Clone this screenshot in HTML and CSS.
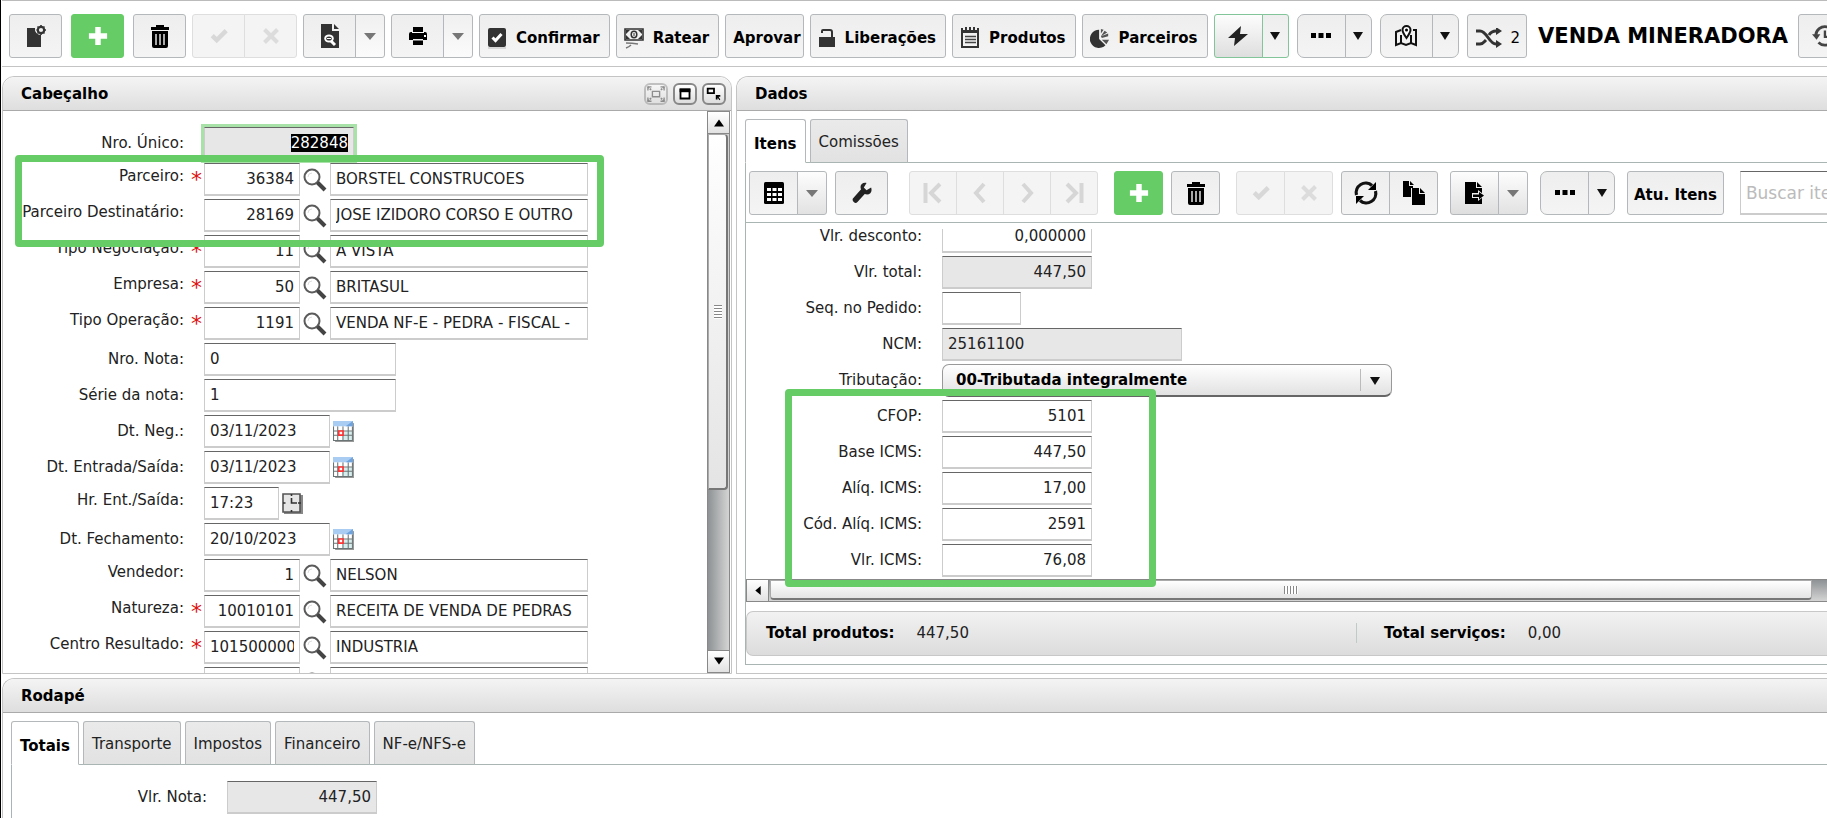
FILE: index.html
```html
<!DOCTYPE html>
<html lang="pt-BR">
<head>
<meta charset="utf-8">
<title>Venda Mineradora</title>
<link rel="stylesheet" href="styles.css">
</head>
<body>
<svg class="sprite" aria-hidden="true">
  <symbol id="i-new" viewBox="0 0 20 22"><path fill="#333" d="M1 3h8a6 6 0 0 0 6 7v12H1z"/><circle cx="15" cy="5" r="3.2" fill="none" stroke="#333" stroke-width="2.2"/><path stroke="#333" stroke-width="1.6" d="M15 0v1.5M15 8.500V10M10.500 5H12M18 5h2M11.500 1.500l1 1M18.500 8.500l-1-1M18.500 1.500l-1 1M11.500 8.500l1-1"/></symbol>
  <symbol id="i-plus" viewBox="0 0 22 22"><path fill="#fff" d="M8 1h6v7h7v6h-7v7H8v-7H1V8h7z"/></symbol>
  <symbol id="i-trash" viewBox="0 0 20 24"><path d="M6 1h8v2h5v3H1V3h5zM2 7h16v15a2 2 0 0 1-2 2H4a2 2 0 0 1-2-2z"/><path fill="#aaa" d="M5 10h2v11H5zM9 10h2v11H9zM13 10h2v11h-2z"/></symbol>
  <symbol id="i-check" viewBox="0 0 20 18"><path fill="none" stroke="#d8d8d8" stroke-width="5" d="M2.500 8.500l5 5L18 3"/></symbol>
  <symbol id="i-x" viewBox="0 0 18 18"><path fill="none" stroke="#dcdcdc" stroke-width="4" d="M2.500 2.500l13 13M15.500 2.500l-13 13"/></symbol>
  <symbol id="i-docsearch" viewBox="0 0 20 24"><path fill="#333" d="M1 0h11v7h7v17H1zM14 0l5 5h-5z"/><ellipse cx="9" cy="14.500" rx="3.800" ry="3" fill="#333" stroke="#fff" stroke-width="2"/><path stroke="#fff" stroke-width="3" d="M11 17l4 4"/><path stroke="#fff" d="M7 14.500h4"/></symbol>
  <symbol id="i-print" viewBox="0 0 20 20"><path d="M5 1h10v5H5zM3 6h14a2 2 0 0 1 2 2v6h-4v-1H5v1H1V8a2 2 0 0 1 2-2zM5 14.500h10V19H5z"/><path fill="#fff" d="M4 6h12v1H4zM16 9h2v2h-2z"/></symbol>
  <symbol id="i-down" viewBox="0 0 12 8"><path d="M0 1h12L6 8z"/></symbol>
  <symbol id="i-tri" viewBox="0 0 10 8"><path d="M0 0h10L5 8z"/></symbol>
  <symbol id="i-confirm" viewBox="0 0 20 22"><rect x="1" y="1" width="18" height="19" rx="2" fill="#333"/><path d="M1 21h18" stroke="#bbb"/><path fill="none" stroke="#fff" stroke-width="3" d="M5.500 10.500l3 3 6-6.500"/></symbol>
  <symbol id="i-money" viewBox="0 0 20 22"><path fill="none" stroke="#333" stroke-width="1.600" d="M1 2h18v11H1z"/><ellipse cx="10" cy="7.500" rx="2.800" ry="3.200" fill="none" stroke="#333" stroke-width="1.500"/><path fill="#333" d="M2 3h4L2 7zM18 3h-4l4 4zM2 12h4L2 8zM18 12h-4l4-4z"/><path stroke="#333" d="M10 6v3"/><path fill="none" stroke="#777" stroke-width="1.500" d="M2 16c3 0 6 0 12 1M2 21c3-1 4-2 5-3"/></symbol>
  <symbol id="i-lock" viewBox="0 0 18 20"><path fill="#333" d="M1 9h16v10H1z"/><path fill="none" stroke="#333" stroke-width="2" d="M4 5V3q0-1 1-1h7q2 0 2 2v6"/></symbol>
  <symbol id="i-note" viewBox="0 0 20 22"><path fill="none" stroke="#333" stroke-width="2" d="M2 4h16v16H2z"/><path fill="#333" d="M1 1h2v5H1zM5 0h2v5H5zM9 0h2v5H9zM13 0h2v5h-2zM17 1h2v5h-2zM1 3h18v3H1z"/><path stroke="#444" stroke-width="1.500" d="M5 9.500h11M5 12.500h11M5 15.500h11"/></symbol>
  <symbol id="i-pie" viewBox="0 0 22 22"><path fill="#333" d="M10 2v10l7 7A10 10 0 1 1 10 2z"/><path fill="#555" d="M12 1l3 1-3 4zM16 3l3 2-7 4zM12 9l8-3v3l-7 2zM13 13h8l-3 5z"/></symbol>
  <symbol id="i-bolt" viewBox="0 0 20 22"><path fill="#222" d="M13 1L0 13h7L6 21 20 9h-8z"/></symbol>
  <symbol id="i-dots" viewBox="0 0 20 6"><path d="M0 0h5v5H0zM7.500 0h5v5h-5zM15 0h5v5h-5z"/></symbol>
  <symbol id="i-map" viewBox="0 0 24 22"><path fill="none" stroke="#111" stroke-width="2" d="M7 5L2 7v13l5-2 5 2 5-2 5 2V5h-3M7 10v8M17 10v8"/><path fill="#fff" stroke="#111" stroke-width="2" d="M12.500 13C9 8 8.500 7 8.500 5a4 4 0 0 1 8 0c0 2-.500 3-4 8z"/><circle cx="12.500" cy="5" r="1.500"/></symbol>
  <symbol id="i-shuffle" viewBox="0 0 28 20"><path fill="none" stroke="#333" stroke-width="3" d="M1 3h4c7 0 9 13 16 13h2M1 16h4c3 0 4-2 6-4M14 7c2-3 4-4 7-4h2"/><path fill="#333" d="M21-1l6 4-6 4zM21 12l6 4-6 4z"/></symbol>
  <symbol id="i-history" viewBox="0 0 26 24"><path fill="none" stroke="#444" stroke-width="3" d="M4 12A10 10 0 1 1 7 19"/><path fill="#444" d="M0 10h9l-4 6z"/><path fill="none" stroke="#444" stroke-width="2.500" d="M14 6v7h5"/></symbol>
  <symbol id="i-search" viewBox="0 0 24 24"><circle cx="9" cy="9" r="7.500" fill="none" stroke="#5b5b5b" stroke-width="2"/><path stroke="#444" stroke-width="4" d="M14.500 14.500L22 22"/><path fill="none" stroke="#ddd" d="M5 9a4 4 0 0 1 4-4"/></symbol>
  <symbol id="i-cal" viewBox="0 0 20 20"><path fill="#999" d="M2 2h18v18H2z"/><path fill="#fff" d="M0 0h19v19H0z"/><path fill="#d5eded" d="M9 10h9v8H9z"/><path fill="none" stroke="#6b7475" d="M.500 5v13.500h18V5M0 9.500h18M0 13.500h18M4.500 5v13M9.500 5v13M14.500 5v13"/><path fill="#a9cdf2" d="M0 0h19v5H0z"/><path fill="#6fa3dd" d="M12 5l7-5v5z"/><path fill="#fff" stroke="#f33" stroke-width="1.600" d="M5.500 9.500h4v4h-4z"/></symbol>
  <symbol id="i-clock" viewBox="0 0 21 21"><path fill="#888" d="M2 2h19v19H2z"/><path fill="#e6e6e6" stroke="#555" stroke-width="1.600" d="M1 1h17v18H1z"/><path fill="none" stroke="#333" stroke-width="1.600" d="M9.500 5v5H15M9.500 1v2M9.500 17v2M1 10h2.500M16 10h3"/></symbol>
  <symbol id="i-table" viewBox="0 0 20 22"><rect width="20" height="22" rx="1.500"/><path fill="#fff" d="M3 6h4v3H3zM8.500 6h4v3h-4zM14 6h4v3h-4zM3 11h4v3H3zM8.500 11h4v3h-4zM14 11h4v3h-4zM3 16h4v3H3zM8.500 16h4v3h-4zM14 16h4v3h-4z"/></symbol>
  <symbol id="i-wrench" viewBox="0 0 22 22"><path fill="#222" d="M21 5l-5 3-3-3 3-5c-5-1-8 3-6 7L1 17q-1 2 1 4t4 0l8-9c5 2 9-2 7-7z"/></symbol>
  <symbol id="i-first" viewBox="0 0 20 22"><path fill="none" stroke="#d6d6d6" stroke-width="4" d="M2.500 1v20M17 2l-9 9 9 9"/></symbol>
  <symbol id="i-prev" viewBox="0 0 20 22"><path fill="none" stroke="#d6d6d6" stroke-width="4" d="M14 2l-8 9 8 9"/></symbol>
  <symbol id="i-next" viewBox="0 0 20 22"><path fill="none" stroke="#d6d6d6" stroke-width="4" d="M6 2l8 9-8 9"/></symbol>
  <symbol id="i-last" viewBox="0 0 20 22"><path fill="none" stroke="#d6d6d6" stroke-width="4" d="M17.500 1v20M3 2l9 9-9 9"/></symbol>
  <symbol id="i-refresh" viewBox="0 0 24 24"><path fill="none" stroke="#111" stroke-width="3.200" d="M2.500 14A9.500 9.500 0 0 1 18 4.500M21.500 10A9.500 9.500 0 0 1 6 19.500"/><path d="M22 1v8h-8zM2 23v-8h8z"/></symbol>
  <symbol id="i-copy" viewBox="0 0 22 24"><path d="M0 0h6v5h4v2H8v9H0zM7 0l4 4H7zM9 7h7v6h6v11H9zM17 7l5 5h-5z"/></symbol>
  <symbol id="i-export" viewBox="0 0 20 22"><path d="M0 0h11v6h6v16H0zM12 0l5 5h-5z"/><path fill="#eee" d="M7 11h6V8l7 5.500-7 5.500v-3H7z"/><path d="M8 12.500h6V10l5 3.500-5 4v-2.500H8z"/></symbol>
</svg>

<header class="toolbar">
  <div class="cluster cluster-wide">
    <button class="btn btn-icon" aria-label="Novo"><svg class="ico"><use href="#i-new"/></svg></button>
    <button class="btn btn-icon btn-add" aria-label="Adicionar"><svg class="ico"><use href="#i-plus"/></svg></button>
    <button class="btn btn-icon" aria-label="Excluir"><svg class="ico ico-tall"><use href="#i-trash"/></svg></button>
  </div>
  <div class="cluster">
    <div class="group">
      <button class="btn btn-icon" disabled aria-label="Salvar"><svg class="ico-sm"><use href="#i-check"/></svg></button>
      <button class="btn btn-icon" disabled aria-label="Cancelar"><svg class="ico-sm"><use href="#i-x"/></svg></button>
    </div>
    <div class="group">
      <button class="btn btn-icon" aria-label="Visualizar"><svg class="ico ico-tall"><use href="#i-docsearch"/></svg></button>
      <button class="btn btn-drop soft" aria-label="Opções de visualização"><svg class="caret"><use href="#i-down"/></svg></button>
    </div>
    <div class="group">
      <button class="btn btn-icon" aria-label="Imprimir"><svg class="ico"><use href="#i-print"/></svg></button>
      <button class="btn btn-drop soft" aria-label="Opções de impressão"><svg class="caret"><use href="#i-down"/></svg></button>
    </div>
    <button class="btn btn-text"><svg class="ico"><use href="#i-confirm"/></svg>Confirmar</button>
    <button class="btn btn-text"><svg class="ico"><use href="#i-money"/></svg>Ratear</button>
    <button class="btn btn-text btn-tight">Aprovar</button>
    <button class="btn btn-text"><svg class="ico-sm"><use href="#i-lock"/></svg>Liberações</button>
    <button class="btn btn-text"><svg class="ico"><use href="#i-note"/></svg>Produtos</button>
    <button class="btn btn-text"><svg class="ico"><use href="#i-pie"/></svg>Parceiros</button>
  </div>
  <div class="cluster cluster-mid">
    <div class="group group-green">
      <button class="btn btn-mid raised" aria-label="Ações rápidas"><svg class="ico"><use href="#i-bolt"/></svg></button>
      <button class="btn btn-arrow" aria-label="Mais ações rápidas"><svg class="caret-sm"><use href="#i-tri"/></svg></button>
    </div>
    <div class="group group-round">
      <button class="btn btn-mid" aria-label="Mais"><svg class="dots"><use href="#i-dots"/></svg></button>
      <button class="btn btn-arrow" aria-label="Mais opções"><svg class="caret-sm"><use href="#i-tri"/></svg></button>
    </div>
    <div class="group group-round">
      <button class="btn btn-icon" aria-label="Mapa"><svg class="ico-lg"><use href="#i-map"/></svg></button>
      <button class="btn btn-arrow" aria-label="Opções do mapa"><svg class="caret-sm"><use href="#i-tri"/></svg></button>
    </div>
    <button class="btn btn-text btn-shuffle"><svg class="ico-wide"><use href="#i-shuffle"/></svg><span>2</span></button>
    <h1 class="title">VENDA MINERADORA</h1>
    <button class="btn btn-icon" aria-label="Histórico"><svg class="ico-lg"><use href="#i-history"/></svg></button>
  </div>
</header>

<main class="main">
  <section class="panel">
    <div class="panel-head"><h2>Cabeçalho</h2>
      <div class="win-tools">
        <button class="win" disabled aria-label="Expandir"><svg viewBox="0 0 20 18"><path fill="none" stroke="#222" stroke-width="1.500" d="M6 6h8v6H6z"/><path stroke="#222" stroke-width="2" stroke-dasharray="2 1" d="M1 1l4 4M19 1l-4 4M1 17l4-4M19 17l-4-4"/><path fill="none" stroke="#222" stroke-width="1.500" d="M1 5V1h4M15 1h4v4M19 13v4h-4M5 17H1v-4"/></svg></button>
        <button class="win" aria-label="Maximizar"><svg viewBox="0 0 20 18"><path fill="#fff" stroke="#000" stroke-width="2" d="M5 4h10v10H5z"/><path d="M4 3h12v4H4z"/></svg></button>
        <button class="win" aria-label="Destacar"><svg viewBox="0 0 20 18"><path fill="none" stroke="#000" stroke-width="2" d="M3 3h7v5H3z"/><path d="M12 10h5v2h-2l2 3-1 1-2-3v2h-2z"/></svg></button>
      </div>
    </div>
    <div class="panel-body split">
      <form class="form">
        <div class="row"><label for="nro">Nro. Único:</label><i></i><input id="nro" class="w-md num" readonly value="282848"></div>
        <div class="row lift"><label for="par">Parceiro:</label><i>*</i><input id="par" class="w-code num" value="36384"><button type="button" class="look" aria-label="Buscar parceiro"><svg><use href="#i-search"/></svg></button><input class="w-desc" aria-label="Nome do parceiro" value="BORSTEL CONSTRUCOES"></div>
        <div class="row lift"><label for="dest">Parceiro Destinatário:</label><i></i><input id="dest" class="w-code num" value="28169"><button type="button" class="look" aria-label="Buscar destinatário"><svg><use href="#i-search"/></svg></button><input class="w-desc" aria-label="Nome do destinatário" value="JOSE IZIDORO CORSO E OUTRO"></div>
        <div class="row lift"><label for="neg">Tipo Negociação:</label><i>*</i><input id="neg" class="w-code num" value="11"><button type="button" class="look" aria-label="Buscar negociação"><svg><use href="#i-search"/></svg></button><input class="w-desc" aria-label="Descrição da negociação" value="A VISTA"></div>
        <div class="row lift"><label for="emp">Empresa:</label><i>*</i><input id="emp" class="w-code num" value="50"><button type="button" class="look" aria-label="Buscar empresa"><svg><use href="#i-search"/></svg></button><input class="w-desc" aria-label="Nome da empresa" value="BRITASUL"></div>
        <div class="row lift"><label for="ope">Tipo Operação:</label><i>*</i><input id="ope" class="w-code num" value="1191"><button type="button" class="look" aria-label="Buscar operação"><svg><use href="#i-search"/></svg></button><input class="w-desc" aria-label="Descrição da operação" value="VENDA NF-E - PEDRA - FISCAL -"></div>
        <div class="row"><label for="nota">Nro. Nota:</label><i></i><input id="nota" class="w-note" value="0"></div>
        <div class="row"><label for="serie">Série da nota:</label><i></i><input id="serie" class="w-note" value="1"></div>
        <div class="row"><label for="dneg">Dt. Neg.:</label><i></i><input id="dneg" class="w-date" value="03/11/2023"><button type="button" class="look" aria-label="Calendário"><svg class="cal"><use href="#i-cal"/></svg></button></div>
        <div class="row"><label for="dent">Dt. Entrada/Saída:</label><i></i><input id="dent" class="w-date" value="03/11/2023"><button type="button" class="look" aria-label="Calendário"><svg class="cal"><use href="#i-cal"/></svg></button></div>
        <div class="row lift"><label for="hr">Hr. Ent./Saída:</label><i></i><input id="hr" class="w-hour" value="17:23"><button type="button" class="look" aria-label="Relógio"><svg class="cal"><use href="#i-clock"/></svg></button></div>
        <div class="row"><label for="dfec">Dt. Fechamento:</label><i></i><input id="dfec" class="w-date" value="20/10/2023"><button type="button" class="look" aria-label="Calendário"><svg class="cal"><use href="#i-cal"/></svg></button></div>
        <div class="row lift"><label for="ven">Vendedor:</label><i></i><input id="ven" class="w-code num" value="1"><button type="button" class="look" aria-label="Buscar vendedor"><svg><use href="#i-search"/></svg></button><input class="w-desc" aria-label="Nome do vendedor" value="NELSON"></div>
        <div class="row lift"><label for="nat">Natureza:</label><i>*</i><input id="nat" class="w-code num" value="10010101"><button type="button" class="look" aria-label="Buscar natureza"><svg><use href="#i-search"/></svg></button><input class="w-desc" aria-label="Descrição da natureza" value="RECEITA DE VENDA DE PEDRAS"></div>
        <div class="row lift"><label for="cen">Centro Resultado:</label><i>*</i><input id="cen" class="w-code" value="101500000"><button type="button" class="look" aria-label="Buscar centro"><svg><use href="#i-search"/></svg></button><input class="w-desc" aria-label="Descrição do centro" value="INDUSTRIA"></div>
        <div class="row lift"><label></label><i></i><input class="w-code num" aria-label="Código"><button type="button" class="look" aria-label="Buscar"><svg><use href="#i-search"/></svg></button><input class="w-desc" aria-label="Descrição"></div>
      </form>
      <div class="vbar">
        <button class="bar-btn" aria-label="Subir"><svg viewBox="0 0 10 8"><path d="M5 1l5 7H0z"/></svg></button>
        <div class="vtrack"><div class="vthumb"><span class="grip"></span></div></div>
        <button class="bar-btn" aria-label="Descer"><svg viewBox="0 0 10 8"><path d="M0 0h10L5 7z"/></svg></button>
      </div>
      <div class="mark mark-partner"></div>
    </div>
  </section>

  <section class="panel">
    <div class="panel-head"><h2>Dados</h2></div>
    <div class="panel-body data">
      <nav class="tabs">
        <button class="tab active">Itens</button>
        <button class="tab">Comissões</button>
      </nav>
      <div class="pane">
        <div class="itembar">
          <div class="group">
            <button class="btn btn-mid" aria-label="Grade"><svg class="ico"><use href="#i-table"/></svg></button>
            <button class="btn btn-drop soft raised" aria-label="Opções da grade"><svg class="caret"><use href="#i-down"/></svg></button>
          </div>
          <button class="btn btn-icon" aria-label="Configurar"><svg class="ico"><use href="#i-wrench"/></svg></button>
          <div class="group group-nav space-lg">
            <button class="btn btn-mid" disabled aria-label="Primeiro"><svg class="ico"><use href="#i-first"/></svg></button>
            <button class="btn btn-mid" disabled aria-label="Anterior"><svg class="ico"><use href="#i-prev"/></svg></button>
            <button class="btn btn-mid" disabled aria-label="Próximo"><svg class="ico"><use href="#i-next"/></svg></button>
            <button class="btn btn-mid" disabled aria-label="Último"><svg class="ico"><use href="#i-last"/></svg></button>
          </div>
          <button class="btn btn-mid btn-add space-md" aria-label="Adicionar item"><svg class="ico"><use href="#i-plus"/></svg></button>
          <button class="btn btn-mid" aria-label="Excluir item"><svg class="ico ico-tall"><use href="#i-trash"/></svg></button>
          <div class="group space-md">
            <button class="btn btn-mid" disabled aria-label="Salvar item"><svg class="ico-sm"><use href="#i-check"/></svg></button>
            <button class="btn btn-mid" disabled aria-label="Cancelar item"><svg class="ico-sm"><use href="#i-x"/></svg></button>
          </div>
          <div class="group">
            <button class="btn btn-mid" aria-label="Atualizar"><svg class="ico-lg"><use href="#i-refresh"/></svg></button>
            <button class="btn btn-mid" aria-label="Duplicar"><svg class="ico-lg"><use href="#i-copy"/></svg></button>
          </div>
          <div class="group space-sm">
            <button class="btn btn-mid raised" aria-label="Exportar"><svg class="ico"><use href="#i-export"/></svg></button>
            <button class="btn btn-drop soft raised" aria-label="Opções de exportação"><svg class="caret"><use href="#i-down"/></svg></button>
          </div>
          <div class="group group-round space-sm">
            <button class="btn btn-mid" aria-label="Mais"><svg class="dots"><use href="#i-dots"/></svg></button>
            <button class="btn btn-arrow" aria-label="Mais opções"><svg class="caret-sm"><use href="#i-tri"/></svg></button>
          </div>
          <button class="btn btn-text btn-even space-sm">Atu. Itens</button>
          <input class="find" placeholder="Buscar itens" aria-label="Buscar itens">
        </div>
        <div class="view">
          <form class="form form-item">
            <div class="row"><label for="vd">Vlr. desconto:</label><i></i><input id="vd" class="w-md num" value="0,000000"></div>
            <div class="row"><label for="vt">Vlr. total:</label><i></i><input id="vt" class="w-md num" readonly value="447,50"></div>
            <div class="row"><label for="sp">Seq. no Pedido:</label><i></i><input id="sp" class="w-seq"></div>
            <div class="row"><label for="ncm">NCM:</label><i></i><input id="ncm" class="w-ncm" readonly value="25161100"></div>
            <div class="row"><label for="tri">Tributação:</label><i></i><div class="pick"><select id="tri"><option>00-Tributada integralmente</option></select><svg class="caret-sm"><use href="#i-tri"/></svg></div></div>
            <div class="row"><label for="cfop">CFOP:</label><i></i><input id="cfop" class="w-md num" value="5101"></div>
            <div class="row"><label for="bi">Base ICMS:</label><i></i><input id="bi" class="w-md num" value="447,50"></div>
            <div class="row"><label for="ai">Alíq. ICMS:</label><i></i><input id="ai" class="w-md num" value="17,00"></div>
            <div class="row"><label for="ci">Cód. Alíq. ICMS:</label><i></i><input id="ci" class="w-md num" value="2591"></div>
            <div class="row"><label for="vi">Vlr. ICMS:</label><i></i><input id="vi" class="w-md num" value="76,08"></div>
          </form>
        </div>
        <div class="hbar">
          <button class="bar-btn" aria-label="Esquerda"><svg viewBox="0 0 8 10"><path d="M7 0v10L1 5z"/></svg></button>
          <div class="htrack"><div class="hthumb"><span class="grip grip-v"></span></div></div>
        </div>
        <div class="totals">
          <div><b>Total produtos:</b><span>447,50</span></div>
          <div><b>Total serviços:</b><span>0,00</span></div>
        </div>
      </div>
      <div class="mark mark-icms"></div>
    </div>
  </section>
</main>

<section class="panel footer">
  <div class="panel-head"><h2>Rodapé</h2></div>
  <div class="panel-body data">
    <nav class="tabs">
      <button class="tab active">Totais</button>
      <button class="tab">Transporte</button>
      <button class="tab">Impostos</button>
      <button class="tab">Financeiro</button>
      <button class="tab">NF-e/NFS-e</button>
    </nav>
    <div class="pane pane-foot">
      <div class="row"><label for="vn">Vlr. Nota:</label><i></i><input id="vn" class="w-md num" readonly value="447,50"></div>
    </div>
  </div>
</section>
<script src="app.js"></script>
</body>
</html>
```
FILE: styles.css
```css
* { box-sizing: border-box; }

html, body { height: 100%; }

body {
  margin: 0;
  display: flex;
  flex-direction: column;
  border-left: 1px solid #000;
  padding-left: 1px;
  overflow: hidden;
  background: #fff;
  color: #222;
  font: 15px/20px Verdana, "DejaVu Sans", sans-serif;
}

button, input, select { font: inherit; color: inherit; margin: 0; }
h1, h2 { margin: 0; color: #000; white-space: nowrap; }
.sprite { display: none; }

/* Top toolbar */
.toolbar {
  display: flex;
  gap: 6px;
  flex: none;
  padding: 13px 0 8px 7px;
  border-top: 1px solid #bbb;
  border-bottom: 1px solid #c4c4c4;
  overflow: hidden;
}
.cluster { display: flex; flex: none; gap: 6px; }
.cluster-wide { gap: 9px; }
.cluster-mid { gap: 8px; }
.title { font-size: 21px; line-height: 44px; padding: 0 2px 0 3px; }

.btn {
  display: flex;
  flex: none;
  align-items: center;
  justify-content: center;
  height: 44px;
  padding: 0;
  border: 1px solid #b4b8ba;
  border-radius: 3px;
  background: linear-gradient(#eee, #f4f4f4);
  color: #000;
}
.btn:disabled { border-color: #dedede; background: #f4f4f4; }
.btn-icon { width: 53px; }
.btn-mid { width: 49px; }
.btn-drop { width: 30px; }
.btn-arrow { width: 27px; }
.btn-add, .btn-add.btn { border-color: #6c6; background: #6c6; }
.btn-text { gap: 9px; padding: 3px 9px 0 7px; font-weight: bold; }
.btn-tight { padding: 3px 2px 0 7px; }
.btn-even { padding: 3px 6px 0; }
.btn-shuffle { gap: 8px; padding: 3px 6px 0 7px; font-weight: normal; }
.raised { background: linear-gradient(#fdfdfd, #dedede); }
.soft { color: #777; background: linear-gradient(#f0f0f0, #fbfbfb); }
.soft.raised { background: linear-gradient(#fdfdfd, #e2e2e2); }

.group { display: flex; flex: none; }
.group .btn + .btn { border-left-color: #b4b8ba; margin-left: -1px; border-radius: 0; }
.group .btn:disabled + .btn:disabled { border-left-color: #dedede; }
.group .btn:first-child { border-radius: 3px 0 0 3px; }
.group .btn:last-child { border-radius: 0 3px 3px 0; }
.group-round .btn:first-child { border-radius: 7px 0 0 7px; }
.group-round .btn:last-child { border-radius: 0 7px 7px 0; }
.group-green .btn, .group-green .btn + .btn { border-color: #82c598; }
.group-nav .btn { width: 48px; }

.ico { width: 20px; height: 22px; flex: none; fill: currentColor; }
.ico-tall { height: 24px; }
.ico-sm { width: 18px; height: 20px; flex: none; }
.ico-lg { width: 24px; height: 24px; flex: none; }
.ico-wide { width: 28px; height: 20px; flex: none; overflow: visible; }
.dots { width: 20px; height: 6px; }
.caret { width: 12px; height: 8px; fill: currentColor; }
.caret-sm { width: 10px; height: 8px; fill: #111; }

/* Panels */
.main {
  display: grid;
  grid-template-columns: 40% minmax(0, 1fr);
  grid-template-rows: minmax(0, 1fr);
  gap: 4px;
  flex: 1;
  min-height: 0;
  padding: 9px 0 4px;
}
.panel {
  display: flex;
  flex-direction: column;
  min-width: 0;
  border: 1px solid #c4c4c4;
  border-radius: 12px 12px 0 0;
}
.main .panel:last-child, .footer { border-right: 0; border-top-right-radius: 0; }
.panel-head {
  display: flex;
  flex: none;
  align-items: center;
  justify-content: space-between;
  height: 34px;
  padding: 0 5px 0 18px;
  border-bottom: 1px solid #aaa;
  border-radius: inherit;
  background: linear-gradient(#f4f4f4, #dedede);
}
.panel-head h2 { font-size: 15px; line-height: 20px; }
.panel-body { position: relative; flex: 1; min-height: 0; }
.win-tools { display: flex; gap: 5px; }
.win {
  width: 24px;
  height: 22px;
  padding: 0 1px;
  border: 2px solid #888;
  border-radius: 6px;
  background: linear-gradient(#fff, #ddd);
}
.win svg { display: block; width: 18px; height: 18px; }
.win:disabled { opacity: 0.45; }

/* Forms */
.split { display: flex; }
.form { flex: 1; min-width: 0; overflow: hidden; padding-top: 16px; }
.row { display: flex; height: 33px; margin-bottom: 3px; }
.row label { flex: 0 0 181px; text-align: right; line-height: 33px; white-space: nowrap; }
.row.lift label { line-height: 27px; }
.row i {
  flex: 0 0 20px;
  padding-left: 7px;
  color: #d11;
  font-size: 22px;
  font-style: normal;
  line-height: 34px;
}
.row input, .find {
  flex: none;
  height: 33px;
  padding: 0 5px;
  border: 1px solid #ccc;
  border-top-color: #666;
  border-bottom-width: 2px;
  border-radius: 0;
  background: #fff;
  outline: 0;
}
.row input[readonly] { background: #e7e7e7; }
.row .num { text-align: right; }
.row input:focus { box-shadow: 0 0 0 3px #a8e2a8; }
::selection { background: #000; color: #fff; }
.row .w-code { width: 96px; }
.row .w-desc { width: 258px; }
.row .w-md { width: 150px; }
.row .w-note { width: 192px; }
.row .w-date { width: 126px; }
.row .w-hour { width: 75px; }
.row .w-seq { width: 79px; }
.row .w-ncm { width: 240px; }
.look { flex: none; width: 30px; padding: 0 0 0 3px; border: 0; background: none; }
.look svg { display: block; width: 24px; height: 24px; }
.look .cal { width: 21px; height: 21px; }

.form-item { flex: none; padding: 0; margin-top: -9px; }
.form-item .row label { flex-basis: 176px; }

.pick { position: relative; width: 450px; }
.pick select {
  appearance: none;
  width: 100%;
  height: 33px;
  padding: 0 13px;
  border: 1px solid #999;
  border-bottom: 2px solid #666;
  border-radius: 7px;
  background: linear-gradient(#fff, #e2e2e2);
  color: #000;
  font-weight: bold;
}
.pick svg { position: absolute; right: 12px; top: 13px; }
.pick::after { content: ""; position: absolute; right: 31px; top: 5px; height: 22px; border-left: 1px solid #bbb; }

/* Tabs */
.data { display: flex; flex-direction: column; padding: 8px 0 8px 8px; }
.tabs { position: relative; z-index: 1; display: flex; flex: none; gap: 4px; margin-bottom: -1px; }
.tab {
  height: 44px;
  padding: 1px 8px 0;
  border: 1px solid #b4b8ba;
  border-bottom-color: #a9b5b3;
  border-radius: 3px 3px 0 0;
  background: linear-gradient(#eaeaea, #e2e2e2);
}
.tab.active { padding: 5px 8px 0; background: #fff; border-bottom-color: #fff; color: #000; font-weight: bold; }
.pane {
  display: flex;
  flex-direction: column;
  flex: 1;
  min-height: 0;
  border: 1px solid #a9b5b3;
  border-right: 0;
}
.pane-foot { padding: 16px 0 1px; border-bottom: 0; }
.pane-foot .row label { flex-basis: 195px; }

.itembar {
  display: flex;
  flex: none;
  gap: 8px;
  padding: 8px 0 7px 3px;
  border-bottom: 1px solid #a9b5b3;
  overflow: hidden;
}
.space-lg { margin-left: 13px; }
.space-md { margin-left: 8px; }
.space-sm { margin-left: 4px; }
.itembar .find { width: 200px; height: 44px; font-size: 17px; margin-left: 8px; }
.find::placeholder { color: #bbb; }
.view { flex: 1; min-height: 0; margin-top: 6px; overflow: hidden; }

/* Scroll bars */
.bar-btn {
  display: flex;
  flex: none;
  align-items: center;
  justify-content: center;
  width: 23px;
  height: 23px;
  padding: 0;
  border: 1px solid #888;
  background: linear-gradient(#fff, #e2e2e2);
}
.bar-btn svg { width: 10px; height: 9px; }
.vbar { display: flex; flex: none; flex-direction: column; width: 23px; margin-right: 1px; }
.vtrack { flex: 1; border: solid #888; border-width: 0 1px; background: linear-gradient(90deg, #8e9294, #d4d4d4); }
.vthumb {
  display: flex;
  align-items: center;
  justify-content: center;
  width: 20px;
  height: 69%;
  border: 1px solid #aaa;
  border-right: 2px solid #777;
  border-bottom: 2px solid #777;
  border-radius: 0 4px 4px 0;
  background: linear-gradient(#fff, #e4e4e4);
}
.grip { width: 8px; height: 14px; background: repeating-linear-gradient(#888 0 1px, #fff 1px 3px); }
.grip-v { width: 14px; height: 8px; background: repeating-linear-gradient(90deg, #888 0 1px, #fff 1px 3px); }
.hbar { display: flex; flex: none; height: 23px; }
.htrack { flex: 1; border: solid #888; border-width: 1px 0; background: linear-gradient(#8e9294, #d4d4d4); }
.hthumb {
  display: flex;
  align-items: center;
  justify-content: center;
  width: calc(100% - 16px);
  height: 20px;
  margin-left: 1px;
  border: 1px solid #aaa;
  border-bottom: 2px solid #777;
  border-radius: 0 0 4px 4px;
  background: linear-gradient(#fff, #e4e4e4);
}

.totals {
  display: grid;
  grid-template-columns: 609px 1fr;
  align-items: center;
  flex: none;
  height: 45px;
  margin: 9px 0 8px;
  padding-bottom: 2px;
  border: 1px solid #c8c8c8;
  border-right: 0;
  border-radius: 7px 0 0 7px;
  background: linear-gradient(#f2f2f2, #dcdcdc);
}
.totals div { display: flex; gap: 22px; padding-left: 19px; }
.totals div + div { padding-left: 27px; border-left: 1px solid #c0cac8; }
.totals b { color: #000; }

.footer { flex: none; }
.footer .panel-body { padding-bottom: 0; }
.footer.panel { border-bottom: 0; }

/* Highlight frames drawn over the forms */
.mark { position: absolute; z-index: 2; border: 7px solid #6c6; border-radius: 4px; pointer-events: none; }
.mark-partner { left: 12px; top: 44px; width: 589px; height: 92px; }
.mark-icms { left: 48px; top: 278px; width: 371px; height: 198px; }
```
FILE: app.js
```js
const first = document.getElementById('nro');
first.focus();
first.select();
```
